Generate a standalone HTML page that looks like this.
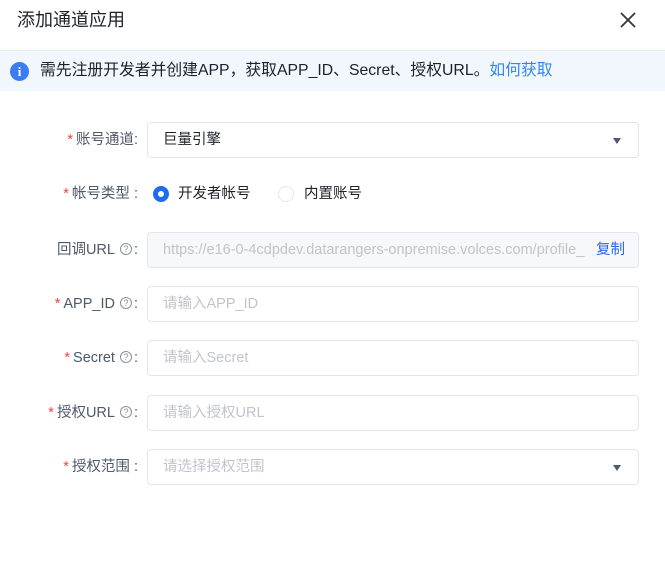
<!DOCTYPE html>
<html><head><meta charset="utf-8"><style>
*{box-sizing:border-box;margin:0;padding:0}
body{width:665px;height:570px;background:#fff;font-family:"Liberation Sans","Noto Sans CJK SC",sans-serif;color:#1d2129;position:relative;overflow:hidden}
.title{position:absolute;left:17px;top:8px;font-size:18px;line-height:24px;color:#1d2129}
.close{position:absolute;left:619px;top:11px}
.banner{position:absolute;left:0;top:50px;width:665px;height:41px;background:#f2f6fd;border-top:1px solid #e8edf5;font-size:15.8px;line-height:40px;padding-left:40px;color:#1d2129;white-space:nowrap}
.banner .ic{position:absolute;left:10px;top:11px;width:19px;height:19px;border-radius:50%;background:#3b7cf2;color:#fff;font-size:13px;font-weight:bold;text-align:center;line-height:19px;font-family:"Liberation Serif",serif}
.banner a{color:#2f88f5;text-decoration:none}
.row{position:absolute;left:0;width:665px;height:36px}
.lab{position:absolute;right:527px;top:0;line-height:36px;font-size:14.5px;color:#4e5969;white-space:nowrap}
.lab .s{color:#f53f3f;margin-right:3px}
.q{display:inline-block;width:12px;height:12px;border:1px solid #86909c;border-radius:50%;font-size:9px;line-height:10px;text-align:center;color:#86909c;vertical-align:middle;margin:0 2px 0 5px;position:relative;top:-1px}
.inp{position:absolute;left:147px;top:0;width:492px;height:36px;border:1px solid #e5e6eb;border-radius:4px;font-size:14.5px;line-height:34px;padding-left:15px;color:#c0c4cc;background:#fff}
.inp.v{color:#1d2129}
.inp.d{background:#f7f8fa;color:#c0c4cc;white-space:nowrap;overflow:hidden}
.arrow{position:absolute;right:17px;top:15px;width:0;height:0;border-left:4px solid transparent;border-right:4px solid transparent;border-top:6px solid #4e5969}
.copy{position:absolute;right:13px;top:0;color:#2667e8;background:#f7f8fa;padding-left:6px}
.radio{position:absolute;top:10px;width:16px;height:16px;border-radius:50%}
.rt{position:absolute;top:0;line-height:36px;font-size:14.5px;color:#1d2129}
</style></head><body>
<div class="title">添加通道应用</div>
<svg class="close" width="18" height="18" viewBox="0 0 18 18"><path d="M2 2L16 16M16 2L2 16" stroke="#333" stroke-width="1.8"/></svg>
<div class="banner"><span class="ic">i</span>需先注册开发者并创建APP，获取APP_ID、Secret、授权URL。<a>如何获取</a></div>

<div class="row" style="top:122px"><div class="lab"><span class="s">*</span>账号通道:</div><div class="inp v">巨量引擎<span class="arrow"></span></div></div>

<div class="row" style="top:176px"><div class="lab"><span class="s">*</span>帐号类型 :</div>
<div class="radio" style="left:153px;border:5px solid #1f6bf0;background:#fff"></div><div class="rt" style="left:178px">开发者帐号</div>
<div class="radio" style="left:278px;border:1px solid #e5e6eb"></div><div class="rt" style="left:304px">内置账号</div></div>

<div class="row" style="top:232px"><div class="lab">回调URL<span class="q">?</span>:</div><div class="inp d">https://e16-0-4cdpdev.datarangers-onpremise.volces.com/profile_<span class="copy">复制</span></div></div>

<div class="row" style="top:286px"><div class="lab"><span class="s">*</span>APP_ID<span class="q">?</span>:</div><div class="inp">请输入APP_ID</div></div>

<div class="row" style="top:340px"><div class="lab"><span class="s">*</span>Secret<span class="q">?</span>:</div><div class="inp">请输入Secret</div></div>

<div class="row" style="top:395px"><div class="lab"><span class="s">*</span>授权URL<span class="q">?</span>:</div><div class="inp">请输入授权URL</div></div>

<div class="row" style="top:449px"><div class="lab"><span class="s">*</span>授权范围 :</div><div class="inp">请选择授权范围<span class="arrow"></span></div></div>
</body></html>
